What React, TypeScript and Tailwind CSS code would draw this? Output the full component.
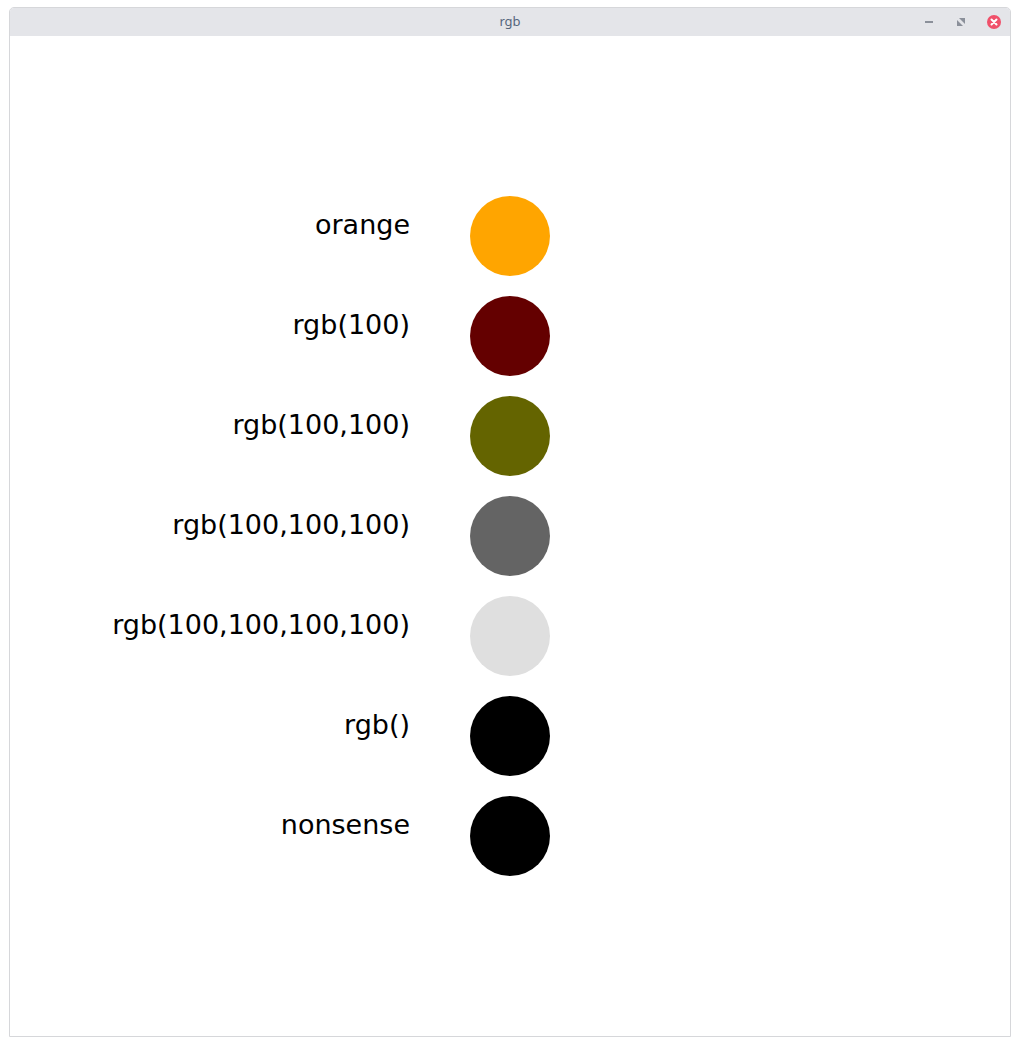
const swatches = [
  { label: 'orange', color: 'bg-[#ffa500]' },
  { label: 'rgb(100)', color: 'bg-[#640000]' },
  { label: 'rgb(100,100)', color: 'bg-[#646400]' },
  { label: 'rgb(100,100,100)', color: 'bg-[#646464]' },
  { label: 'rgb(100,100,100,100)', color: 'bg-[#dfdfdf]' },
  { label: 'rgb()', color: 'bg-black' },
  { label: 'nonsense', color: 'bg-black' },
]

function TitleBar() {
  return (
    <div className="relative h-[28px] bg-[#e4e5e9] rounded-t-[4px] flex items-center justify-center">
      <span className="text-[13px] text-[#56657d]" style={{ fontFamily: '"Noto Sans", sans-serif' }}>
        rgb
      </span>
      {/* window controls */}
      <div className="absolute right-[8px] top-0 h-full flex items-center gap-[18px]">
        <svg width="14" height="14" viewBox="0 0 14 14">
          <rect x="3" y="6" width="8" height="2" fill="#8b909a" />
        </svg>
        <svg width="14" height="14" viewBox="0 0 14 14">
          <path d="M5 3 L11 3 L11 9 Z" fill="#8b909a" />
          <path d="M3 5 L3 11 L9 11 Z" fill="#8b909a" />
        </svg>
        <svg width="16" height="16" viewBox="0 0 16 16">
          <circle cx="8" cy="8" r="7" fill="#f0506a" />
          <path d="M5.5 5.5 L10.5 10.5 M10.5 5.5 L5.5 10.5" stroke="white" strokeWidth="2" strokeLinecap="round" />
        </svg>
      </div>
    </div>
  )
}

export default function App() {
  return (
    <div className="w-[1020px] h-[1046px] bg-white pt-[7px] pl-[9px]">
      <div className="w-[1002px] h-[1030px] border border-[#d6d7da] rounded-t-[5px] flex flex-col">
        <TitleBar />
        <div className="flex-1 bg-white pt-[160px] flex flex-col gap-5">
          {swatches.map(({ label, color }) => (
            <div key={label} className="flex items-start gap-[60px]">
              <div
                className="w-[400px] text-right text-[27px] leading-[32px] pt-[13px] text-black"
                style={{ fontFamily: '"DejaVu Sans", sans-serif' }}
              >
                {label}
              </div>
              <div className={`w-20 h-20 rounded-full ${color}`} />
            </div>
          ))}
        </div>
      </div>
    </div>
  )
}
